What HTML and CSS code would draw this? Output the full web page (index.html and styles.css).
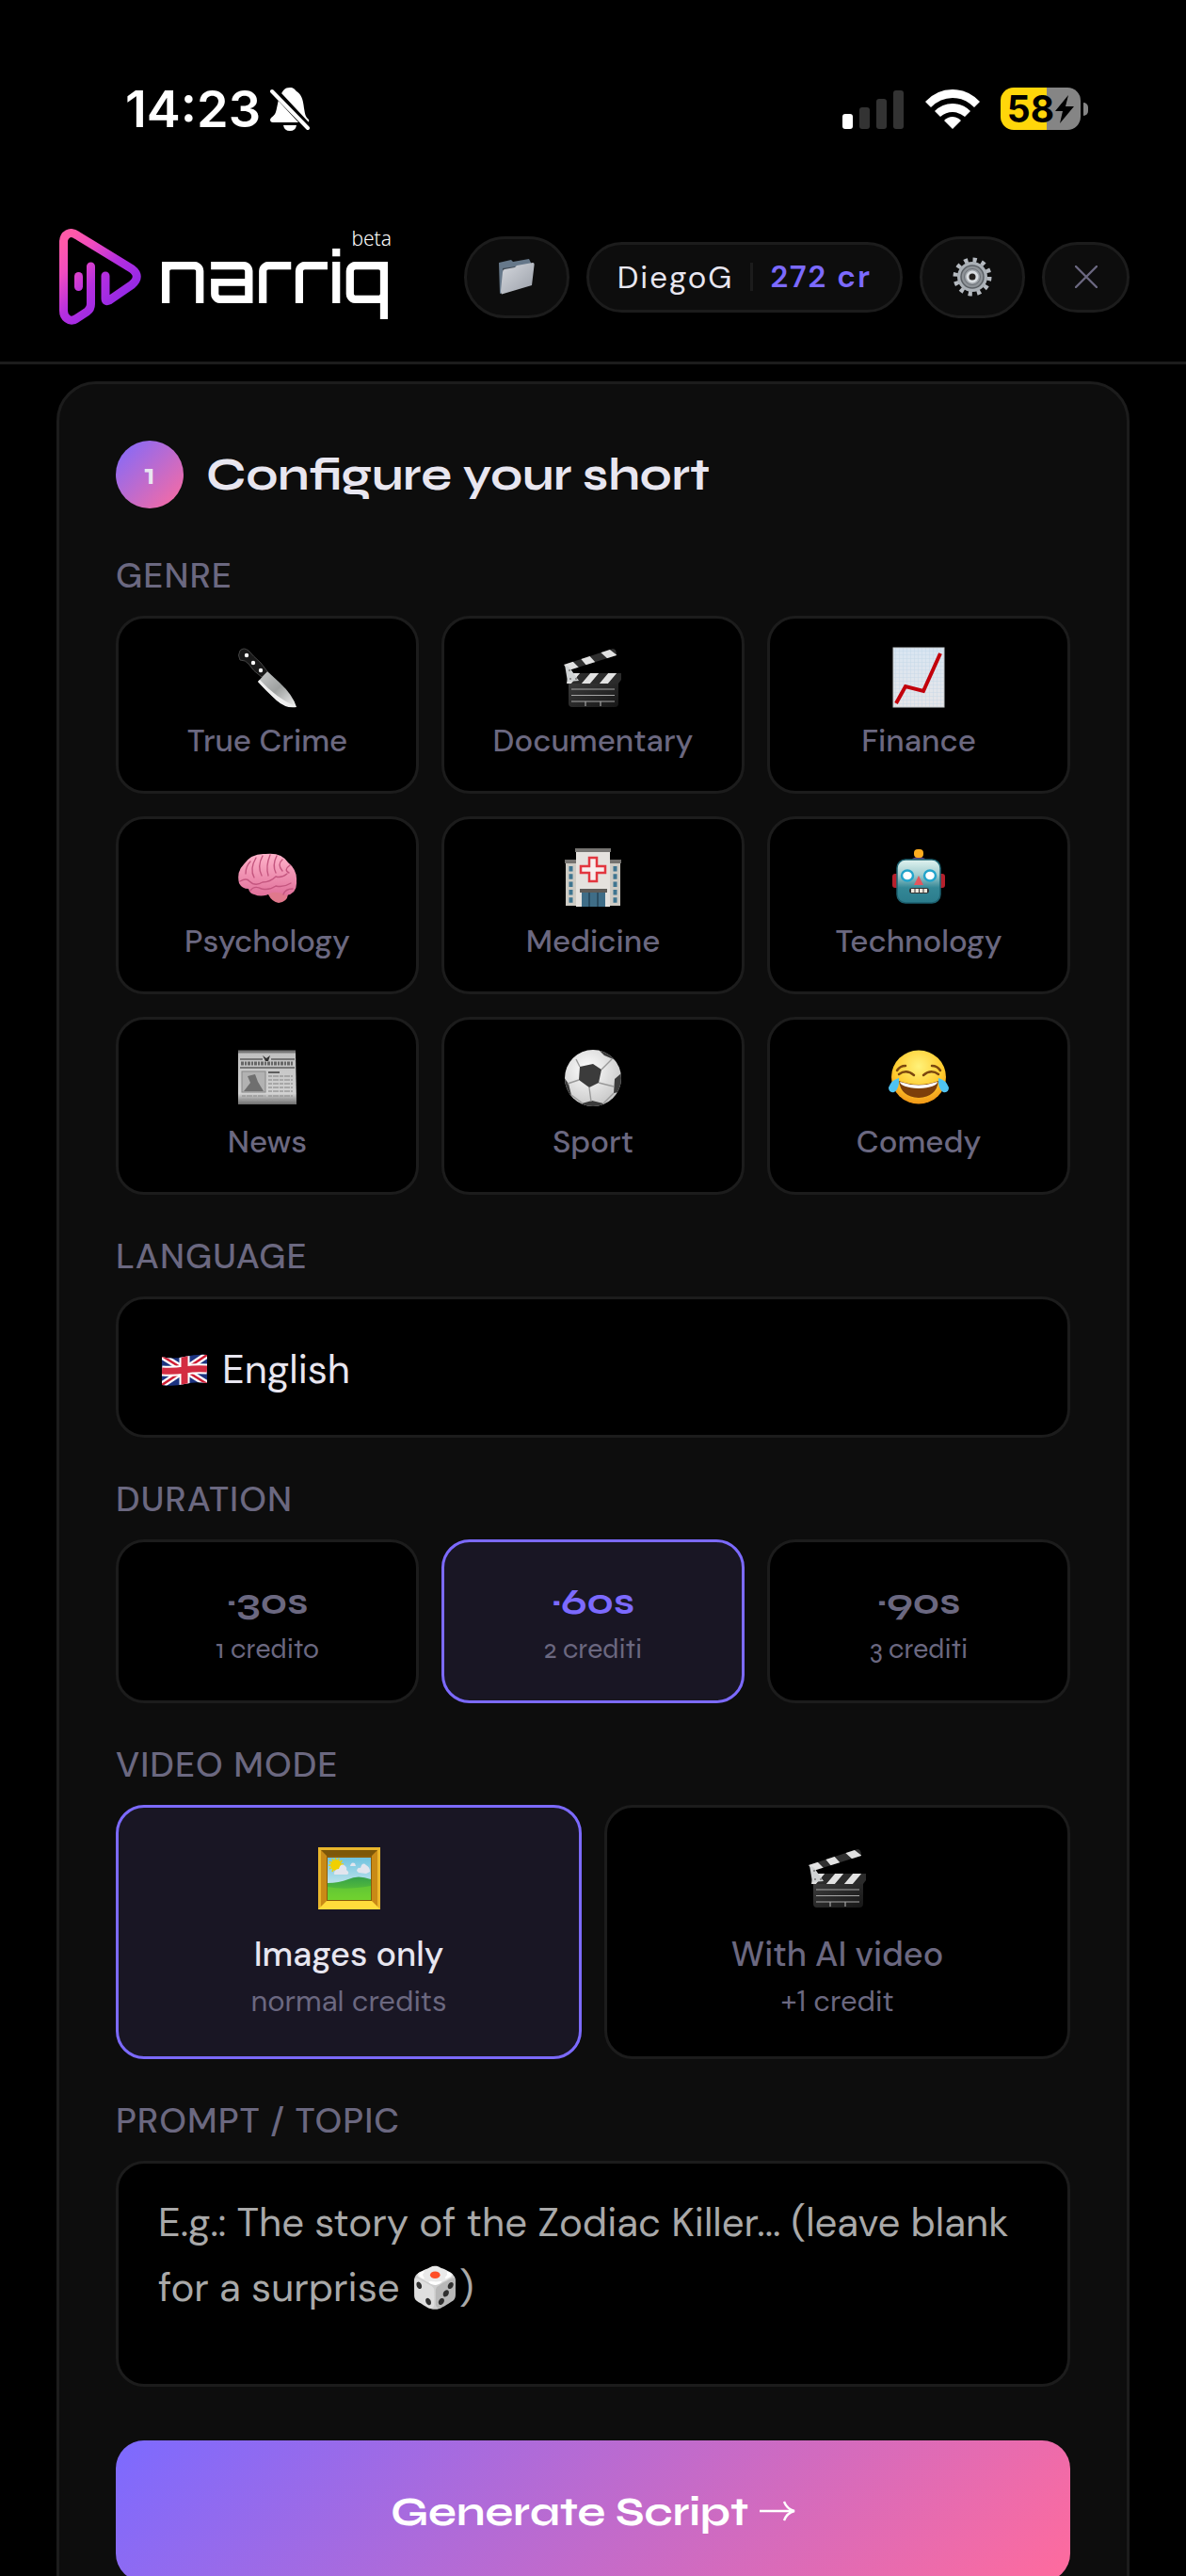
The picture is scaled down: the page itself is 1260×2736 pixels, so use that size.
FILE: index.html
```html
<!DOCTYPE html>
<html lang="en">
<head>
  <meta charset="UTF-8">
  <title>narriq</title>
  <meta name="viewport" content="width=device-width, initial-scale=1.0">
  <link rel="stylesheet" href="styles.css">
</head>
<body>
  <!-- Shared icons -->
  <svg class="defs" aria-hidden="true">
    <defs>
      <linearGradient id="clap-body" x1="0" y1="0" x2="1" y2="1">
        <stop offset="0" stop-color="#3c3c3c"/><stop offset="1" stop-color="#161616"/>
      </linearGradient>
      <clipPath id="clap-top"><path d="M2 19 L54 2 Q58 2 58 9 L7 25 Z"/></clipPath>
      <clipPath id="clap-mid"><path d="M7 28 H63 V35 L60 39 H5 Z"/></clipPath>
      <symbol id="clapper" viewBox="0 0 66 66">
        <path d="M7 37 H60 V60 Q60 64 56 64 H11 Q7 64 7 60 Z" fill="url(#clap-body)"/>
        <path d="M10 45 H56 M10 51.500 H56 M10 58 H56 M25 58 V63 M41 58 V63" stroke="#a5a5a5" stroke-width="1.200"/>
        <g clip-path="url(#clap-top)">
          <rect width="66" height="40" fill="#303030"/>
          <path d="M0 16 L8 12 L20 24 L8 30 Z M17 9 L26 6 L36 17 L27 21 Z M38 3 L47 0 L60 10 L50 14 Z" fill="#e2e2e2"/>
        </g>
        <g clip-path="url(#clap-mid)">
          <rect y="27" width="66" height="13" fill="#2b2b2b"/>
          <path d="M9 40 L20 27 H10 L0 40 Z M20 40 L31 27 H40 L29 40 Z M39 40 L50 27 H59 L48 40 Z" fill="#e2e2e2"/>
        </g>
        <path d="M3 19 L8 22 L18 36 L6 37 Z" fill="#cfd2d3"/>
        <circle cx="8" cy="25" r="1" fill="#777"/><circle cx="9" cy="34" r="1" fill="#777"/><circle cx="15" cy="34" r="1" fill="#777"/>
      </symbol>
    </defs>
  </svg>

  <div class="status-bar">
    <div class="status-left">
      <span class="status-time">14:23</span>
      <svg class="status-bell" viewBox="0 0 42 46" aria-hidden="true">
        <path d="M21 0 C15 0 14 3 11 8 C8 13 8 20 6 26 C5 30 1 31 0 34 Q0 37 3 37 H39 Q42 37 41 34 C37 31 37 27 36 22 C35 12 33 7 28 4 C26 2 25 0 21 0 Z" fill="#fff"/>
        <path d="M14 40 H28 Q27 46 21 46 Q15 46 14 40 Z" fill="#fff"/>
        <path d="M0 -1 L43 45" stroke="#000" stroke-width="8"/>
        <path d="M2 4 L40 43" stroke="#fff" stroke-width="4" stroke-linecap="round"/>
      </svg>
    </div>
    <div class="status-right">
      <svg class="status-signal" viewBox="0 0 66 42" aria-hidden="true">
        <rect x="0" y="26" width="11" height="16" rx="3" fill="#fff"/>
        <rect x="18" y="19" width="11" height="23" rx="3" fill="#333"/>
        <rect x="36" y="10" width="11" height="32" rx="3" fill="#333"/>
        <rect x="54" y="1" width="11" height="41" rx="3" fill="#333"/>
      </svg>
      <svg class="status-wifi" viewBox="0 0 58 42" aria-hidden="true">
        <path d="M0 13 Q12 0 29 0 Q46 0 58 13 L52 19 Q42 9 29 9 Q16 9 6 19 Z" fill="#fff"/>
        <path d="M10 23 Q18 15 29 15 Q40 15 48 23 L42 29 Q36 24 29 24 Q22 24 16 29 Z" fill="#fff"/>
        <path d="M20 33 Q24 29 29 29 Q34 29 38 33 L29 42 Z" fill="#fff"/>
      </svg>
      <div class="battery">
        <div class="battery-body">
          <span>58</span>
          <svg viewBox="0 0 20 30" aria-hidden="true"><path d="M14 0 L0 17 H8 L5 30 L20 12 H11 Z" fill="#000"/></svg>
        </div>
        <div class="battery-cap"></div>
      </div>
    </div>
  </div>

  <header class="header">
    <a class="logo" href="#">
      <svg class="logo-mark" viewBox="0 0 88 102" aria-hidden="true">
        <defs>
          <linearGradient id="brand" gradientUnits="userSpaceOnUse" x1="4" y1="16" x2="66" y2="78">
            <stop offset="0" stop-color="#ff5aa9"/><stop offset=".25" stop-color="#f04cc0"/>
            <stop offset=".6" stop-color="#b52fdf"/><stop offset="1" stop-color="#9429e6"/>
          </linearGradient>
        </defs>
        <g fill="none" stroke="url(#brand)" stroke-width="9" stroke-linecap="round" stroke-linejoin="round">
          <path d="M33.500 40 V80 Q33.500 85 29.500 88 L18 95.500 Q13 99 8.500 95.500 Q4.500 92.500 4.500 87 V14 Q4.500 8 9 5.500 Q13.500 3 19 7 L77 42.500 Q87.500 50.500 77 59.500 L53 76 Q49 78 49 74 V50"/>
          <path d="M20.500 50.500 V61.500"/>
        </g>
      </svg>
      <span class="wordmark">
        <span class="wordmark-tag">beta</span>
        <span class="wordmark-name">narriq</span>
      </span>
    </a>
    <nav class="header-actions">
      <button class="pill pill-icon" type="button" aria-label="Projects">
        <svg viewBox="0 0 42 42">
          <defs><linearGradient id="folder" x1="0" y1="0" x2="1" y2="1"><stop offset="0" stop-color="#d5d8de"/><stop offset="1" stop-color="#9a9fa8"/></linearGradient></defs>
          <path d="M2 6 L15 3 L17 5 L34 2 L36 6 V12 L5 38 L3 39 Z" fill="#66788a"/>
          <path d="M6 12 L35 8 V12 L7 38 Z" fill="#3d4650"/>
          <path d="M8 13 L19 11 L21 9 L38 6 Q40 6 39.500 9 L37 30 L5 39.500 Q4 39 4 36 L6 16 Q6 13.500 8 13 Z" fill="url(#folder)"/>
        </svg>
      </button>
      <button class="pill pill-user" type="button">
        <span>DiegoG</span>
        <span class="credits">272 cr</span>
      </button>
      <button class="pill pill-icon" type="button" aria-label="Settings">
        <svg viewBox="0 0 42 42">
          <circle cx="21" cy="21" r="18" fill="none" stroke="#b5bac0" stroke-width="5" stroke-dasharray="4.200 5.225"/>
          <circle cx="21" cy="21" r="16" fill="#abb1b7"/>
          <circle cx="21" cy="21" r="12" fill="#8d9297" stroke="#5c6166" stroke-width="1.500"/>
          <circle cx="21" cy="21" r="8.500" fill="#9da2a7" stroke="#6c7177"/>
          <circle cx="21" cy="21" r="5" fill="#24211f" stroke="#d9dde1" stroke-width="3"/>
        </svg>
      </button>
      <button class="pill pill-close" type="button" aria-label="Close">
        <svg viewBox="0 0 24 24"><path d="M1 1 L23 23 M23 1 L1 23" stroke="#6b6880" stroke-width="2.400" stroke-linecap="round"/></svg>
      </button>
    </nav>
  </header>

  <main class="main">
    <form class="card">
      <div class="step-head">
        <span class="step-num">1</span>
        <h1 class="step-title">Configure your short</h1>
      </div>

      <div class="field">
        <div class="label" id="genre-label">Genre</div>
        <div class="grid-3" role="group" aria-labelledby="genre-label">
          <button class="option genre" type="button">
            <svg viewBox="0 0 66 66" aria-hidden="true">
              <defs><linearGradient id="blade" x1="0" y1="0" x2="1" y2="1"><stop offset="0" stop-color="#c9cbcb"/><stop offset=".5" stop-color="#9ea1a0"/><stop offset="1" stop-color="#f3f3f3"/></linearGradient></defs>
              <path d="M33 26 L46 38 Q60 51 64 64 Q53 65 43 57 Q31 46 23 37 Z" fill="url(#blade)"/>
              <path d="M23 37 L25 35 Q42 54 64 64 Q53 66 43 57 Q31 46 23 37 Z" fill="#eee"/>
              <path d="M4 4 Q8 0 13 4 Q18 10 26 17 L33 26 L27 32 Q18 26 13 18 Q10 14 4 14 Q1 9 4 4 Z" fill="#191919" stroke="#444"/>
              <circle cx="11" cy="9" r="2.200" fill="#fff"/><circle cx="18" cy="17" r="2.200" fill="#fff"/><circle cx="26" cy="25" r="2.200" fill="#fff"/>
            </svg>
            <span>True Crime</span>
          </button>
          <button class="option genre" type="button">
            <svg viewBox="0 0 66 66" aria-hidden="true"><use href="#clapper"/></svg>
            <span>Documentary</span>
          </button>
          <button class="option genre" type="button">
            <svg viewBox="0 0 66 66" aria-hidden="true">
              <defs>
                <pattern id="graph" width="4" height="4" patternUnits="userSpaceOnUse"><path d="M4 0 H0 V4" fill="none" stroke="#b9cfe2" stroke-width=".6"/></pattern>
                <linearGradient id="paper" x1="0" y1="0" x2="0" y2="1"><stop offset="0" stop-color="#d9e6f2"/><stop offset="1" stop-color="#e6e6e8"/></linearGradient>
              </defs>
              <rect x="6" y="1" width="54" height="63" fill="url(#paper)"/>
              <rect x="6" y="1" width="54" height="63" fill="url(#graph)" stroke="#c4c9cd"/>
              <path d="M9 60 L19 42 L38 47 L56 7" fill="none" stroke="#c2000b" stroke-width="4"/>
            </svg>
            <span>Finance</span>
          </button>
          <button class="option genre" type="button">
            <svg viewBox="0 0 66 66" aria-hidden="true">
              <defs><linearGradient id="brain" x1="0" y1="0" x2="0" y2="1"><stop offset="0" stop-color="#ffb3ca"/><stop offset="1" stop-color="#e0709a"/></linearGradient></defs>
              <path d="M34 46 Q46 44 55 50 Q54 58 45 59 Q38 58 34 50 Z" fill="#e0788c"/>
              <path d="M3 38 Q0 26 8 18 Q16 6 31 7 Q48 5 55 16 Q65 24 64 36 Q65 49 53 51 Q46 47 38 48 Q28 54 19 50 Q14 49 13 44 Q6 44 3 38 Z" fill="url(#brain)"/>
              <path d="M4 36 Q11 32 14 36 Q20 42 28 37 Q36 37 42 31 Q48 33 54 28 M15 46 Q19 40 27 44 Q35 46 42 41 Q50 43 58 38 M10 28 Q10 20 15 15 M19 32 Q14 23 21 11 M27 30 Q22 20 28 9 M34 30 Q31 20 36 8 M42 27 Q38 19 43 9 M49 25 Q43 18 49 13 M56 27 Q50 24 57 19 M50 50 Q52 44 60 44" fill="none" stroke="#c4567f" stroke-width="1.400" stroke-linecap="round"/>
            </svg>
            <span>Psychology</span>
          </button>
          <button class="option genre" type="button">
            <svg viewBox="0 0 66 66" aria-hidden="true">
              <path d="M4 14 H62 V62 H4 Z" fill="#cdcbc4"/>
              <path d="M3 13 H15 V17 H3 Z M51 13 H63 V17 H51 Z" fill="#74726f"/>
              <path d="M15 2 H51 V63 H15 Z" fill="#e5e2de"/>
              <path d="M14 1 H52 V5 H14 Z" fill="#777572"/>
              <path d="M29 11 H37 V20 H46 V27 H37 V36 H29 V27 H20 V20 H29 Z" fill="#f7eeee" stroke="#e2363f" stroke-width="2.500"/>
              <path d="M21 47 H46 V63 H21 Z" fill="#3f6d87"/>
              <path d="M19 44 H48 V48 H19 Z" fill="#5d5b58"/>
              <path d="M29 48 V63 M38 48 V63" stroke="#254357" stroke-width="1.500"/>
              <path d="M9.500 20 V60 M56.500 20 V60" stroke="#3f7590" stroke-width="4" stroke-dasharray="5.500 2.800"/>
            </svg>
            <span>Medicine</span>
          </button>
          <button class="option genre" type="button">
            <svg viewBox="0 0 66 66" aria-hidden="true">
              <defs><linearGradient id="robot" x1="0" y1="0" x2="0" y2="1"><stop offset="0" stop-color="#e0f3f0"/><stop offset=".35" stop-color="#a3cdcf"/><stop offset=".65" stop-color="#338796"/><stop offset="1" stop-color="#2b7c8c"/></linearGradient></defs>
              <rect x="5" y="28" width="56" height="15" rx="3" fill="#b6202c"/>
              <path d="M26 12 Q33 8 40 12 Q38 16 33 16 Q28 16 26 12 Z" fill="#5d4380"/>
              <rect x="28" y="2" width="10" height="9" rx="4" fill="#ffad1f"/>
              <rect x="10" y="13" width="46" height="46" rx="9" fill="url(#robot)" stroke="#1d6271" stroke-width="1.500"/>
              <path d="M33 30 L38 40 H28 Z" fill="#e4555d"/>
              <ellipse cx="21" cy="30" rx="6" ry="5.500" fill="#fff" stroke="#22a4cb" stroke-width="2.500"/>
              <ellipse cx="45" cy="30" rx="6" ry="5.500" fill="#fff" stroke="#22a4cb" stroke-width="2.500"/>
              <rect x="23" y="43" width="21" height="6" rx="3" fill="#333"/>
              <path d="M25 46 H43" stroke="#efe9de" stroke-width="4" stroke-dasharray="3.500 1"/>
            </svg>
            <span>Technology</span>
          </button>
          <button class="option genre" type="button">
            <svg viewBox="0 0 66 66" aria-hidden="true">
              <defs><linearGradient id="news" x1="0" y1="0" x2="0" y2="1"><stop offset="0" stop-color="#bfbfbf"/><stop offset=".8" stop-color="#d2d2d2"/><stop offset="1" stop-color="#6d6d6d"/></linearGradient></defs>
              <path d="M2 3 H63 L64 60 H2 Z" fill="url(#news)"/>
              <path d="M2 4 H63" stroke="#777" stroke-width="3"/>
              <path d="M4 12 H28 M37 12 H62 M4 21 H62" stroke="#777" stroke-width="1.800"/>
              <path d="M5 16.500 H61" stroke="#666" stroke-width="4" stroke-dasharray="3 1 2 1"/>
              <path d="M28 8 L32 11 L36 8 L34 14 H31 Z" fill="#333"/>
              <rect x="6" y="25" width="25" height="22" fill="#b2b2b2" stroke="#888"/>
              <path d="M8 46 L15 37 L12 30 L20 28 L23 36 L29 46 Z" fill="#6f6f6f"/>
              <path d="M34 26 H46" stroke="#444" stroke-width="1.600"/>
              <path d="M34 30 H60 M34 34 H60 M34 38 H60 M34 42 H60 M34 46 H60 M6 51 H31 M34 51 H60 M6 55 H31 M34 55 H60" stroke="#9a9a9a" stroke-width="1.400" stroke-dasharray="4 1 6 1"/>
            </svg>
            <span>News</span>
          </button>
          <button class="option genre" type="button">
            <svg viewBox="0 0 66 66" aria-hidden="true">
              <defs>
                <radialGradient id="ball" cx=".4" cy=".35" r=".7"><stop offset="0" stop-color="#fff"/><stop offset="1" stop-color="#c5c5c5"/></radialGradient>
                <clipPath id="ball-clip"><circle cx="33" cy="32" r="30"/></clipPath>
              </defs>
              <circle cx="33" cy="32" r="30" fill="url(#ball)"/>
              <g clip-path="url(#ball-clip)">
                <path d="M19 20 L33 17 L42 23 L39 37 L29 42 L18 34 Z M37 0 L52 5 L57 13 L45 8 Z M10 12 L20 3 L13 3 L4 14 Z M2 31 L7 38 L10 50 L0 46 Z M64 26 L56 33 L55 48 L66 46 Z M21 59 L32 56 L44 59 L40 64 H26 Z" fill="#3b3b3b"/>
                <path d="M19 20 L15 12 M42 23 L53 12 M39 37 L55 41 M29 42 L31 57 M18 34 L6 38 M10 50 L22 59 M44 59 L55 48" fill="none" stroke="#999" stroke-width="1.400"/>
              </g>
            </svg>
            <span>Sport</span>
          </button>
          <button class="option genre" type="button">
            <svg viewBox="0 0 66 66" aria-hidden="true">
              <defs><radialGradient id="joy" cx=".5" cy=".3" r=".75"><stop offset="0" stop-color="#fff27a"/><stop offset=".6" stop-color="#ffcb2e"/><stop offset="1" stop-color="#ee8c12"/></radialGradient></defs>
              <ellipse cx="33" cy="31" rx="29" ry="28.500" fill="url(#joy)"/>
              <path d="M12 35 Q33 43 54 35 Q52 52 33 53 Q14 52 12 35 Z" fill="#7c3f0a"/>
              <path d="M13 36 Q33 43 53 36 Q52 42 33 43 Q14 42 13 36 Z" fill="#fff"/>
              <path d="M12 28 Q20 22 28 29 M38 29 Q46 22 54 28 M10 24 Q13 19 19 19 M47 19 Q53 19 56 24" fill="none" stroke="#7c480f" stroke-width="2.500" stroke-linecap="round"/>
              <path d="M12 32 Q13 43 7 47 Q1 48 1 42 Q4 34 12 32 Z M54 32 Q53 43 59 47 Q65 48 65 42 Q62 34 54 32 Z" fill="#4fc3f2"/>
            </svg>
            <span>Comedy</span>
          </button>
        </div>
      </div>

      <div class="field">
        <label class="label" for="language">Language</label>
        <div class="select-wrap">
          <svg class="flag" viewBox="0 0 48 34" aria-hidden="true">
            <defs><clipPath id="flag-clip"><path d="M0 3 Q10 6 24 3 T48 1 V31 Q36 29 24 32 T0 33 Z"/></clipPath></defs>
            <g clip-path="url(#flag-clip)">
              <rect width="48" height="34" fill="#1c3380"/>
              <path d="M0 2 L48 32 M48 1 L0 33" stroke="#fff" stroke-width="7"/>
              <path d="M0 2 L48 32 M48 1 L0 33" stroke="#cf1d35" stroke-width="2.500"/>
              <path d="M24 0 V34 M0 18 Q12 19 24 17 T48 16" stroke="#fff" stroke-width="11" fill="none"/>
              <path d="M24 0 V34 M0 18 Q12 19 24 17 T48 16" stroke="#d32c42" stroke-width="7" fill="none"/>
            </g>
          </svg>
          <select class="select" id="language">
            <option>English</option>
            <option>Italiano</option>
          </select>
        </div>
      </div>

      <div class="field">
        <div class="label" id="duration-label">Duration</div>
        <div class="grid-3" role="group" aria-labelledby="duration-label">
          <button class="option duration" type="button"><b>·30s</b><small>1 credito</small></button>
          <button class="option duration active" type="button" aria-pressed="true"><b>·60s</b><small>2 crediti</small></button>
          <button class="option duration" type="button"><b>·90s</b><small>3 crediti</small></button>
        </div>
      </div>

      <div class="field">
        <div class="label" id="mode-label">Video mode</div>
        <div class="grid-2" role="group" aria-labelledby="mode-label">
          <button class="option mode active" type="button" aria-pressed="true">
            <svg viewBox="0 0 66 66" aria-hidden="true">
              <defs>
                <linearGradient id="sky" x1="0" y1="0" x2="0" y2="1"><stop offset="0" stop-color="#6fc3df"/><stop offset="1" stop-color="#eef6f3"/></linearGradient>
                <linearGradient id="hill" x1="0" y1="0" x2="0" y2="1"><stop offset="0" stop-color="#35a04a"/><stop offset="1" stop-color="#6fd32c"/></linearGradient>
              </defs>
              <rect x="0" width="66" height="66" fill="#e9b62c"/>
              <rect x="3" y="3" width="60" height="60" fill="#c98a16"/>
              <path d="M0 66 L10 56 H56 L66 66 Z" fill="#ffdc3b"/>
              <path d="M3 3 H63 L57 9 H9 Z" fill="#7d5708"/>
              <rect x="9" y="9" width="48" height="48" fill="#8a5c0b"/>
              <rect x="10" y="11" width="46" height="45" fill="url(#sky)"/>
              <path d="M10 38 Q22 38 32 34 Q42 29 56 34 V56 H10 Z" fill="url(#hill)"/>
              <path d="M10 42 Q28 46 56 41 V56 H10 Z" fill="#71d230" opacity=".6"/>
              <circle cx="19" cy="19" r="6" fill="#f0d000"/>
              <circle cx="19" cy="19" r="7" fill="none" stroke="#f0d000" stroke-width="2" stroke-dasharray="1.500 2"/>
              <path d="M17 27 Q18 23 22 23 Q24 16 29 20 Q31 22 30 24 Q34 27 31 29 H19 Q16 29 17 27 Z M41 25 Q42 21 45 22 Q47 15 51 19 Q55 21 55 26 L51 28 L43 27 Z M34 20 Q35 15 39 17 L40 20 Z" fill="#e2e5ee"/>
            </svg>
            <span class="mode-name">Images only</span>
            <small>normal credits</small>
          </button>
          <button class="option mode" type="button">
            <svg viewBox="0 0 66 66" aria-hidden="true"><use href="#clapper"/></svg>
            <span class="mode-name">With AI video</span>
            <small>+1 credit</small>
          </button>
        </div>
      </div>

      <div class="field field-prompt">
        <label class="label" for="prompt">Prompt / Topic</label>
        <textarea class="textarea" id="prompt" placeholder="E.g.: The story of the Zodiac Killer... (leave blank for a surprise 🎲)"></textarea>
      </div>

      <button class="submit" type="submit">
        <span>Generate Script</span>
        <svg viewBox="0 0 38 22" aria-hidden="true"><path d="M0 11 H36 M26 1 Q29 9 37 11 Q29 13 26 21" fill="none" stroke="#fff" stroke-width="2.400"/></svg>
      </button>
    </form>
  </main>
</body>
</html>
```
FILE: styles.css
```css
:root {
  --bg: #000;
  --surface: #0d0d0d;
  --border: #1c1c1c;
  --text: #e8e6f0;
  --muted: #6b6880;
  --accent: #7c6aff;
  --accent2: #ff6b9d;
  --font: 'DM Sans', 'Open Sans', 'Noto Sans', sans-serif;
  --font-head: 'Syne', Inter, sans-serif;
}
* {
  box-sizing: border-box;
  margin: 0;
  padding: 0;
}
body {
  display: flex;
  flex-direction: column;
  height: 100vh;
  overflow: hidden;
  background: var(--bg);
  color: var(--text);
  font-family: var(--font);
}
button, select, textarea {
  font: inherit;
  color: inherit;
}
button {
  cursor: pointer;
}
svg {
  display: block;
  flex-shrink: 0;
}
.defs {
  position: absolute;
  width: 0;
  height: 0;
}

/* Status bar */
.status-bar {
  flex-shrink: 0;
  display: flex;
  align-items: center;
  justify-content: space-between;
  height: 204px;
  padding: 27px 104px 0 133px;
}
.status-left {
  display: flex;
  align-items: center;
  gap: 10px;
}
.status-time {
  font-family: Inter, sans-serif;
  font-size: 54px;
  font-weight: 600;
  color: #fff;
}
.status-bell {
  width: 42px;
  height: 46px;
}
.status-right {
  display: flex;
  align-items: center;
  gap: 22px;
}
.status-signal {
  width: 66px;
  height: 42px;
}
.status-wifi {
  width: 58px;
  height: 42px;
}
.battery {
  display: flex;
  align-items: center;
  gap: 3px;
}
.battery-body {
  display: flex;
  align-items: center;
  justify-content: center;
  gap: 1px;
  width: 85px;
  height: 45px;
  border-radius: 14px;
  background: linear-gradient(90deg, #ffd60a 58%, #858585 58%);
  color: #000;
  font-family: Inter, sans-serif;
  font-size: 39px;
  font-weight: 700;
}
.battery-body svg {
  width: 20px;
  height: 30px;
}
.battery-cap {
  width: 5px;
  height: 14px;
  border-radius: 0 5px 5px 0;
  background: #858585;
}

/* Header */
.header {
  flex-shrink: 0;
  display: flex;
  align-items: center;
  justify-content: space-between;
  padding: 39px 60px;
  border-bottom: 3px solid var(--border);
}
.logo {
  display: flex;
  gap: 17px;
  padding-left: 3px;
  color: #fff;
  text-decoration: none;
}
.logo-mark {
  width: 88px;
  height: 102px;
}
.wordmark {
  display: flex;
  flex-direction: column;
  align-items: flex-end;
}
.wordmark-tag {
  font-family: 'Noto Sans', sans-serif;
  font-size: 21px;
  font-weight: 300;
  line-height: 20px;
}
.wordmark-name {
  font-family: 'Orbitron', 'Michroma', 'DejaVu Sans', sans-serif;
  font-size: 75px;
  font-weight: 500;
  line-height: 60px;
}
.header-actions {
  display: flex;
  align-items: center;
  gap: 18px;
}
.pill {
  display: flex;
  align-items: center;
  justify-content: center;
  height: 75px;
  border: 3px solid var(--border);
  border-radius: 60px;
  background: var(--surface);
}
.pill-icon {
  width: 112px;
  height: 87px;
}
.pill-icon svg {
  width: 42px;
  height: 42px;
}
.pill-user {
  padding: 0 30px;
  font-size: 33px;
  letter-spacing: 2px;
}
.credits {
  margin-left: 18px;
  padding-left: 18px;
  border-left: 3px solid var(--border);
  line-height: 30px;
  font-weight: 600;
  color: var(--accent);
}
.pill-close {
  width: 93px;
}
.pill-close svg {
  width: 24px;
  height: 24px;
}

/* Card */
.main {
  flex: 1;
  overflow-y: auto;
  scrollbar-width: none;
  padding: 18px 60px;
}
.card {
  padding: 60px;
  border: 3px solid var(--border);
  border-radius: 42px;
  background: var(--surface);
}
.step-head {
  display: flex;
  align-items: center;
  gap: 24px;
  margin-bottom: 48px;
}
.step-num {
  display: flex;
  align-items: center;
  justify-content: center;
  width: 72px;
  height: 72px;
  border-radius: 50%;
  background: linear-gradient(135deg, var(--accent), var(--accent2));
  font-family: var(--font-head);
  font-size: 31px;
  font-weight: 700;
}
.step-title {
  font-family: var(--font-head);
  font-size: 48px;
  font-weight: 700;
}
.field {
  margin-bottom: 42px;
}
.field-prompt {
  margin-bottom: 57px;
}
.label {
  display: block;
  margin-bottom: 19px;
  font-size: 37px;
  font-weight: 500;
  line-height: 47px;
  letter-spacing: 1px;
  text-transform: uppercase;
  color: var(--muted);
}
.grid-3 {
  display: grid;
  grid-template-columns: repeat(3, 1fr);
  gap: 24px;
}
.grid-2 {
  display: grid;
  grid-template-columns: repeat(2, 1fr);
  gap: 24px;
}
.option {
  display: flex;
  flex-direction: column;
  align-items: center;
  border: 3px solid var(--border);
  border-radius: 30px;
  background: var(--bg);
  color: var(--muted);
}
.option.active {
  border-color: var(--accent);
  background: #191624;
}
.option svg {
  width: 66px;
  height: 66px;
}
.option small {
  font-size: 31px;
  font-weight: 400;
  color: var(--muted);
}
.genre {
  gap: 11px;
  padding: 30px 0 31px;
  font-size: 33px;
  font-weight: 500;
  line-height: 45px;
}
.duration {
  padding: 37px 0 33px;
  font-family: var(--font-head);
}
.duration b {
  font-size: 39px;
  line-height: 54px;
}
.duration small {
  font-size: 30px;
  line-height: 44px;
}
.duration.active b {
  color: var(--accent);
}
.mode {
  padding: 42px 0 34px;
}
.mode-name {
  margin-top: 22px;
  font-size: 36px;
  font-weight: 500;
  line-height: 52px;
}
.mode small {
  line-height: 48px;
}
.mode.active .mode-name {
  color: var(--text);
}

.select-wrap {
  position: relative;
}
.flag {
  position: absolute;
  left: 49px;
  top: 61px;
  width: 48px;
  height: 34px;
}
.select {
  display: block;
  width: 100%;
  padding: 48px 42px 42px 110px;
  border: 3px solid var(--border);
  border-radius: 30px;
  background: var(--bg);
  appearance: none;
  font-size: 42px;
  line-height: 54px;
}
.textarea {
  display: block;
  width: 100%;
  height: 240px;
  padding: 28px 42px;
  border: 3px solid var(--border);
  border-radius: 30px;
  background: var(--bg);
  resize: none;
  font-size: 42px;
  line-height: 69px;
}
.textarea::placeholder {
  color: #a9a9a9;
}
.submit {
  display: flex;
  align-items: center;
  justify-content: center;
  gap: 12px;
  width: 100%;
  height: 150px;
  border: none;
  border-radius: 30px;
  background: linear-gradient(135deg, var(--accent), var(--accent2));
  color: #fff;
  font-family: var(--font-head);
  font-size: 44px;
  font-weight: 700;
}
.submit svg {
  width: 38px;
  height: 22px;
}
```
